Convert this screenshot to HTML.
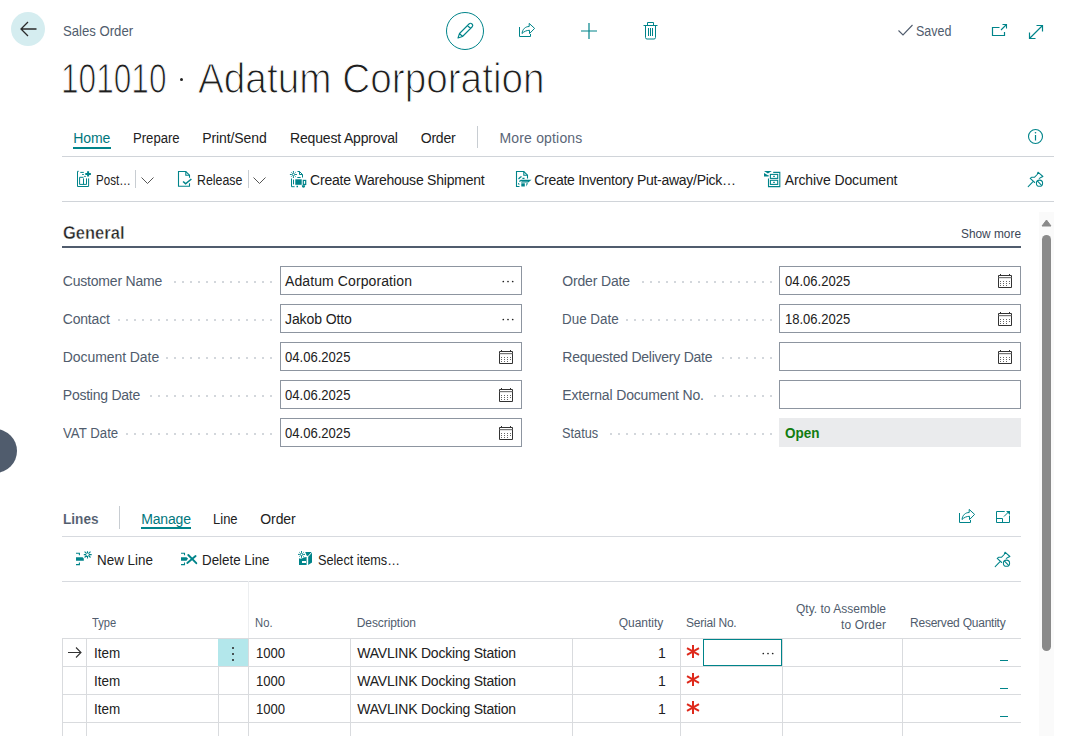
<!DOCTYPE html><html><head><meta charset="utf-8"><style>
html,body{margin:0;padding:0;background:#fff;width:1080px;height:736px;overflow:hidden;position:relative}
.t{position:absolute;white-space:nowrap;font-family:"Liberation Sans",sans-serif}
.r{position:absolute;display:block}
</style></head><body>
<div class="r" style="left:11px;top:12px;width:34px;height:34px;border-radius:50%;background:#d5edf0"></div>
<svg class="r" style="left:19px;top:20px" width="18" height="18" viewBox="0 0 18 18"><path d="M2 9 H17.5 M9 2 L2 9 L9 16" fill="none" stroke="#2b2b2b" stroke-width="1.3"/></svg>
<div class="t" style="left:62.50px;top:23.86px;font-size:14.3px;line-height:15.976px;color:#505c6d;font-weight:400;transform:scaleX(0.9189);transform-origin:0 0;">Sales Order</div>
<div class="t" style="left:60.80px;top:56.19px;font-size:42px;line-height:46.922px;color:#1e1e1e;font-weight:400;transform:scaleX(0.7525);transform-origin:0 0;-webkit-text-stroke:1.1px #fff;paint-order:normal">101010</div>
<div class="r" style="left:180px;top:78px;width:3px;height:3px;background:#222;border-radius:50%"></div>
<div class="t" style="left:198.40px;top:56.19px;font-size:42px;line-height:46.922px;color:#1e1e1e;font-weight:400;transform:scaleX(0.9221);transform-origin:0 0;-webkit-text-stroke:1.1px #fff;paint-order:normal">Adatum Corporation</div>
<div class="r" style="left:446px;top:12px;width:38px;height:38px;border-radius:50%;border:1px solid #00848a;box-sizing:border-box"></div>
<svg class="r" style="left:455px;top:21px" width="20" height="20" viewBox="0 0 20 20"><path d="M3 17 L4.5 12.5 L14 3 A1.4 1.4 0 0 1 17 6 L7.5 15.5 Z M4.5 12.5 L7.5 15.5 M12.5 4.5 L15.5 7.5" fill="none" stroke="#00848a" stroke-width="1.1" stroke-linejoin="round"/></svg>
<svg class="r" style="left:517px;top:21px" width="20" height="18" viewBox="0 0 20 18"><path d="M2.5 6 V15.5 H13.5 V13" fill="none" stroke="#00848a" stroke-width="1"/><path d="M5 12.5 C5.5 8 8.5 5.5 12.2 5.5 V2.4 L17.6 7.4 L12.5 12.6 V9.3 C9.5 9.3 7 10.5 5 12.5 Z" fill="none" stroke="#00848a" stroke-width="1" stroke-linejoin="round"/></svg>
<svg class="r" style="left:580px;top:22px" width="18" height="18" viewBox="0 0 18 18"><path d="M9 1 V17 M1 9 H17" stroke="#00848a" stroke-width="1.2"/></svg>
<svg class="r" style="left:642px;top:21px" width="18" height="20" viewBox="0 0 18 20"><path d="M1.5 4.5 H15.5 M5.5 4.5 V1.5 H11.5 V4.5 M3.5 4.5 V16.5 A1.5 1.5 0 0 0 5 18 H12 A1.5 1.5 0 0 0 13.5 16.5 V4.5" fill="none" stroke="#00848a" stroke-width="1"/><path d="M6.5 7 V15 M8.5 7 V15 M10.5 7 V15" stroke="#00848a" stroke-width="1"/></svg>
<svg class="r" style="left:897px;top:23px" width="17" height="14" viewBox="0 0 17 14"><path d="M1.5 7.5 L6 12 L15.5 2" fill="none" stroke="#505c6d" stroke-width="1.1"/></svg>
<div class="t" style="left:916.00px;top:23.93px;font-size:14px;line-height:15.641px;color:#505c6d;font-weight:400;transform:scaleX(0.8919);transform-origin:0 0;">Saved</div>
<svg class="r" style="left:990px;top:23px" width="19" height="15" viewBox="0 0 19 15"><path d="M9.5 4.5 H2.5 V12.5 H14.5 V9" fill="none" stroke="#00848a" stroke-width="1.2"/><path d="M11 7 L16.5 1.5 M12.5 1.5 H16.5 V5.5" fill="none" stroke="#00848a" stroke-width="1.1"/></svg>
<svg class="r" style="left:1027px;top:22.5px" width="18" height="18" viewBox="0 0 18 18"><path d="M2.5 15.5 L15.5 2.5 M9.5 2.5 H15.5 V8.5 M2.5 9.5 V15.5 H8.5" fill="none" stroke="#00848a" stroke-width="1.2"/></svg>
<div class="t" style="left:73.30px;top:131.23px;font-size:14px;line-height:15.641px;color:#00777d;font-weight:400;letter-spacing:-0.093px;">Home</div>
<div class="r" style="left:73px;top:147px;width:38px;height:2px;background:#00848a"></div>
<div class="t" style="left:133.30px;top:131.23px;font-size:14px;line-height:15.641px;color:#212121;font-weight:400;transform:scaleX(0.9370);transform-origin:0 0;">Prepare</div>
<div class="t" style="left:202.20px;top:131.23px;font-size:14px;line-height:15.641px;color:#212121;font-weight:400;letter-spacing:-0.098px;">Print/Send</div>
<div class="t" style="left:290.00px;top:131.23px;font-size:14px;line-height:15.641px;color:#212121;font-weight:400;letter-spacing:-0.169px;">Request Approval</div>
<div class="t" style="left:420.70px;top:131.23px;font-size:14px;line-height:15.641px;color:#212121;font-weight:400;letter-spacing:-0.193px;">Order</div>
<div class="r" style="left:477px;top:126px;width:1px;height:22px;background:#c8cdd2"></div>
<div class="t" style="left:499.50px;top:131.23px;font-size:14px;line-height:15.641px;color:#5a6677;font-weight:400;letter-spacing:0.171px;">More options</div>
<svg class="r" style="left:1027px;top:128px" width="17" height="17" viewBox="0 0 17 17"><circle cx="8.5" cy="8.5" r="7" fill="none" stroke="#00848a" stroke-width="1.1"/><path d="M8.5 7 V12.5" stroke="#00848a" stroke-width="1.2"/><circle cx="8.5" cy="4.8" r="0.8" fill="#00848a"/></svg>
<div class="r" style="left:62px;top:156px;width:992px;height:1px;background:#d0d4d9"></div>
<!--actions-->
<div class="r" style="left:62px;top:201px;width:992px;height:1px;background:#d0d4d9"></div>
<div class="t" style="left:62.80px;top:222.91px;font-size:18px;line-height:20.110px;color:#262626;font-weight:700;transform:scaleX(0.9172);transform-origin:0 0;-webkit-text-stroke:0.4px #fff">General</div>
<div class="r" style="left:62px;top:246px;width:959px;height:2px;background:#505c6d"></div>
<div class="t" style="left:961.00px;top:227.69px;font-size:12.5px;line-height:13.965px;color:#3b4656;font-weight:400;transform:scaleX(0.9486);transform-origin:0 0;">Show more</div>
<div class="t" style="left:62.80px;top:274.33px;font-size:14px;line-height:15.641px;color:#505c6d;font-weight:400;letter-spacing:-0.202px;">Customer Name</div>
<div class="r" style="left:270px;top:281px;width:2px;height:2px;background:#d3d7dc"></div><div class="r" style="left:262px;top:281px;width:2px;height:2px;background:#d3d7dc"></div><div class="r" style="left:254px;top:281px;width:2px;height:2px;background:#d3d7dc"></div><div class="r" style="left:246px;top:281px;width:2px;height:2px;background:#d3d7dc"></div><div class="r" style="left:238px;top:281px;width:2px;height:2px;background:#d3d7dc"></div><div class="r" style="left:230px;top:281px;width:2px;height:2px;background:#d3d7dc"></div><div class="r" style="left:222px;top:281px;width:2px;height:2px;background:#d3d7dc"></div><div class="r" style="left:214px;top:281px;width:2px;height:2px;background:#d3d7dc"></div><div class="r" style="left:206px;top:281px;width:2px;height:2px;background:#d3d7dc"></div><div class="r" style="left:198px;top:281px;width:2px;height:2px;background:#d3d7dc"></div><div class="r" style="left:190px;top:281px;width:2px;height:2px;background:#d3d7dc"></div><div class="r" style="left:182px;top:281px;width:2px;height:2px;background:#d3d7dc"></div><div class="r" style="left:174px;top:281px;width:2px;height:2px;background:#d3d7dc"></div>
<div class="r" style="left:280px;top:266px;width:242px;height:29px;border:1px solid #8d95a0;box-sizing:border-box;background:#fff"></div>
<div class="t" style="left:62.80px;top:312.33px;font-size:14px;line-height:15.641px;color:#505c6d;font-weight:400;letter-spacing:-0.205px;">Contact</div>
<div class="r" style="left:270px;top:319px;width:2px;height:2px;background:#d3d7dc"></div><div class="r" style="left:262px;top:319px;width:2px;height:2px;background:#d3d7dc"></div><div class="r" style="left:254px;top:319px;width:2px;height:2px;background:#d3d7dc"></div><div class="r" style="left:246px;top:319px;width:2px;height:2px;background:#d3d7dc"></div><div class="r" style="left:238px;top:319px;width:2px;height:2px;background:#d3d7dc"></div><div class="r" style="left:230px;top:319px;width:2px;height:2px;background:#d3d7dc"></div><div class="r" style="left:222px;top:319px;width:2px;height:2px;background:#d3d7dc"></div><div class="r" style="left:214px;top:319px;width:2px;height:2px;background:#d3d7dc"></div><div class="r" style="left:206px;top:319px;width:2px;height:2px;background:#d3d7dc"></div><div class="r" style="left:198px;top:319px;width:2px;height:2px;background:#d3d7dc"></div><div class="r" style="left:190px;top:319px;width:2px;height:2px;background:#d3d7dc"></div><div class="r" style="left:182px;top:319px;width:2px;height:2px;background:#d3d7dc"></div><div class="r" style="left:174px;top:319px;width:2px;height:2px;background:#d3d7dc"></div><div class="r" style="left:166px;top:319px;width:2px;height:2px;background:#d3d7dc"></div><div class="r" style="left:158px;top:319px;width:2px;height:2px;background:#d3d7dc"></div><div class="r" style="left:150px;top:319px;width:2px;height:2px;background:#d3d7dc"></div><div class="r" style="left:142px;top:319px;width:2px;height:2px;background:#d3d7dc"></div><div class="r" style="left:134px;top:319px;width:2px;height:2px;background:#d3d7dc"></div><div class="r" style="left:126px;top:319px;width:2px;height:2px;background:#d3d7dc"></div><div class="r" style="left:118px;top:319px;width:2px;height:2px;background:#d3d7dc"></div>
<div class="r" style="left:280px;top:304px;width:242px;height:29px;border:1px solid #8d95a0;box-sizing:border-box;background:#fff"></div>
<div class="t" style="left:62.80px;top:350.33px;font-size:14px;line-height:15.641px;color:#505c6d;font-weight:400;letter-spacing:-0.075px;">Document Date</div>
<div class="r" style="left:270px;top:357px;width:2px;height:2px;background:#d3d7dc"></div><div class="r" style="left:262px;top:357px;width:2px;height:2px;background:#d3d7dc"></div><div class="r" style="left:254px;top:357px;width:2px;height:2px;background:#d3d7dc"></div><div class="r" style="left:246px;top:357px;width:2px;height:2px;background:#d3d7dc"></div><div class="r" style="left:238px;top:357px;width:2px;height:2px;background:#d3d7dc"></div><div class="r" style="left:230px;top:357px;width:2px;height:2px;background:#d3d7dc"></div><div class="r" style="left:222px;top:357px;width:2px;height:2px;background:#d3d7dc"></div><div class="r" style="left:214px;top:357px;width:2px;height:2px;background:#d3d7dc"></div><div class="r" style="left:206px;top:357px;width:2px;height:2px;background:#d3d7dc"></div><div class="r" style="left:198px;top:357px;width:2px;height:2px;background:#d3d7dc"></div><div class="r" style="left:190px;top:357px;width:2px;height:2px;background:#d3d7dc"></div><div class="r" style="left:182px;top:357px;width:2px;height:2px;background:#d3d7dc"></div><div class="r" style="left:174px;top:357px;width:2px;height:2px;background:#d3d7dc"></div><div class="r" style="left:166px;top:357px;width:2px;height:2px;background:#d3d7dc"></div>
<div class="r" style="left:280px;top:342px;width:242px;height:29px;border:1px solid #8d95a0;box-sizing:border-box;background:#fff"></div>
<div class="t" style="left:62.80px;top:388.33px;font-size:14px;line-height:15.641px;color:#505c6d;font-weight:400;letter-spacing:-0.241px;">Posting Date</div>
<div class="r" style="left:270px;top:395px;width:2px;height:2px;background:#d3d7dc"></div><div class="r" style="left:262px;top:395px;width:2px;height:2px;background:#d3d7dc"></div><div class="r" style="left:254px;top:395px;width:2px;height:2px;background:#d3d7dc"></div><div class="r" style="left:246px;top:395px;width:2px;height:2px;background:#d3d7dc"></div><div class="r" style="left:238px;top:395px;width:2px;height:2px;background:#d3d7dc"></div><div class="r" style="left:230px;top:395px;width:2px;height:2px;background:#d3d7dc"></div><div class="r" style="left:222px;top:395px;width:2px;height:2px;background:#d3d7dc"></div><div class="r" style="left:214px;top:395px;width:2px;height:2px;background:#d3d7dc"></div><div class="r" style="left:206px;top:395px;width:2px;height:2px;background:#d3d7dc"></div><div class="r" style="left:198px;top:395px;width:2px;height:2px;background:#d3d7dc"></div><div class="r" style="left:190px;top:395px;width:2px;height:2px;background:#d3d7dc"></div><div class="r" style="left:182px;top:395px;width:2px;height:2px;background:#d3d7dc"></div><div class="r" style="left:174px;top:395px;width:2px;height:2px;background:#d3d7dc"></div><div class="r" style="left:166px;top:395px;width:2px;height:2px;background:#d3d7dc"></div><div class="r" style="left:158px;top:395px;width:2px;height:2px;background:#d3d7dc"></div><div class="r" style="left:150px;top:395px;width:2px;height:2px;background:#d3d7dc"></div>
<div class="r" style="left:280px;top:380px;width:242px;height:29px;border:1px solid #8d95a0;box-sizing:border-box;background:#fff"></div>
<div class="t" style="left:62.80px;top:426.33px;font-size:14px;line-height:15.641px;color:#505c6d;font-weight:400;transform:scaleX(0.9455);transform-origin:0 0;">VAT Date</div>
<div class="r" style="left:270px;top:433px;width:2px;height:2px;background:#d3d7dc"></div><div class="r" style="left:262px;top:433px;width:2px;height:2px;background:#d3d7dc"></div><div class="r" style="left:254px;top:433px;width:2px;height:2px;background:#d3d7dc"></div><div class="r" style="left:246px;top:433px;width:2px;height:2px;background:#d3d7dc"></div><div class="r" style="left:238px;top:433px;width:2px;height:2px;background:#d3d7dc"></div><div class="r" style="left:230px;top:433px;width:2px;height:2px;background:#d3d7dc"></div><div class="r" style="left:222px;top:433px;width:2px;height:2px;background:#d3d7dc"></div><div class="r" style="left:214px;top:433px;width:2px;height:2px;background:#d3d7dc"></div><div class="r" style="left:206px;top:433px;width:2px;height:2px;background:#d3d7dc"></div><div class="r" style="left:198px;top:433px;width:2px;height:2px;background:#d3d7dc"></div><div class="r" style="left:190px;top:433px;width:2px;height:2px;background:#d3d7dc"></div><div class="r" style="left:182px;top:433px;width:2px;height:2px;background:#d3d7dc"></div><div class="r" style="left:174px;top:433px;width:2px;height:2px;background:#d3d7dc"></div><div class="r" style="left:166px;top:433px;width:2px;height:2px;background:#d3d7dc"></div><div class="r" style="left:158px;top:433px;width:2px;height:2px;background:#d3d7dc"></div><div class="r" style="left:150px;top:433px;width:2px;height:2px;background:#d3d7dc"></div><div class="r" style="left:142px;top:433px;width:2px;height:2px;background:#d3d7dc"></div><div class="r" style="left:134px;top:433px;width:2px;height:2px;background:#d3d7dc"></div><div class="r" style="left:126px;top:433px;width:2px;height:2px;background:#d3d7dc"></div>
<div class="r" style="left:280px;top:418px;width:242px;height:29px;border:1px solid #8d95a0;box-sizing:border-box;background:#fff"></div>
<div class="t" style="left:285.00px;top:274.33px;font-size:14px;line-height:15.641px;color:#212121;font-weight:400;letter-spacing:0.100px;">Adatum Corporation</div>
<div class="t" style="left:285.00px;top:312.33px;font-size:14px;line-height:15.641px;color:#212121;font-weight:400;letter-spacing:-0.099px;">Jakob Otto</div>
<div class="t" style="left:285.00px;top:350.33px;font-size:14px;line-height:15.641px;color:#212121;font-weight:400;transform:scaleX(0.9334);transform-origin:0 0;">04.06.2025</div>
<div class="t" style="left:285.00px;top:388.33px;font-size:14px;line-height:15.641px;color:#212121;font-weight:400;transform:scaleX(0.9334);transform-origin:0 0;">04.06.2025</div>
<div class="t" style="left:285.00px;top:426.33px;font-size:14px;line-height:15.641px;color:#212121;font-weight:400;transform:scaleX(0.9334);transform-origin:0 0;">04.06.2025</div>
<svg class="r" style="left:500.5px;top:280px" width="14" height="3"><circle cx="2.3" cy="1.5" r="0.85" fill="#222"/><circle cx="7" cy="1.5" r="0.85" fill="#222"/><circle cx="11.7" cy="1.5" r="0.85" fill="#222"/></svg>
<svg class="r" style="left:500.5px;top:318px" width="14" height="3"><circle cx="2.3" cy="1.5" r="0.85" fill="#222"/><circle cx="7" cy="1.5" r="0.85" fill="#222"/><circle cx="11.7" cy="1.5" r="0.85" fill="#222"/></svg>
<svg class="r" style="left:498px;top:349px" width="17" height="16" viewBox="0 0 17 16"><path d="M1.5 2.5 H14.5 V14.5 H1.5 Z" fill="none" stroke="#333" stroke-width="1"/><path d="M1.5 4.6 H14.5" stroke="#777" stroke-width="1.2"/><path d="M3.5 1 V3 M12.5 1 V3" stroke="#333" stroke-width="1"/><g fill="#666"><rect x="3" y="8" width="1" height="1"/><rect x="6" y="8" width="1" height="1"/><rect x="9" y="8" width="1" height="1"/><rect x="12" y="8" width="1" height="1"/><rect x="3" y="10" width="1" height="1"/><rect x="6" y="10" width="1" height="1"/><rect x="9" y="10" width="1" height="1"/><rect x="12" y="10" width="1" height="1"/><rect x="3" y="12" width="1" height="1"/><rect x="6" y="12" width="1" height="1"/><rect x="9" y="12" width="1" height="1"/></g></svg>
<svg class="r" style="left:498px;top:387px" width="17" height="16" viewBox="0 0 17 16"><path d="M1.5 2.5 H14.5 V14.5 H1.5 Z" fill="none" stroke="#333" stroke-width="1"/><path d="M1.5 4.6 H14.5" stroke="#777" stroke-width="1.2"/><path d="M3.5 1 V3 M12.5 1 V3" stroke="#333" stroke-width="1"/><g fill="#666"><rect x="3" y="8" width="1" height="1"/><rect x="6" y="8" width="1" height="1"/><rect x="9" y="8" width="1" height="1"/><rect x="12" y="8" width="1" height="1"/><rect x="3" y="10" width="1" height="1"/><rect x="6" y="10" width="1" height="1"/><rect x="9" y="10" width="1" height="1"/><rect x="12" y="10" width="1" height="1"/><rect x="3" y="12" width="1" height="1"/><rect x="6" y="12" width="1" height="1"/><rect x="9" y="12" width="1" height="1"/></g></svg>
<svg class="r" style="left:498px;top:425px" width="17" height="16" viewBox="0 0 17 16"><path d="M1.5 2.5 H14.5 V14.5 H1.5 Z" fill="none" stroke="#333" stroke-width="1"/><path d="M1.5 4.6 H14.5" stroke="#777" stroke-width="1.2"/><path d="M3.5 1 V3 M12.5 1 V3" stroke="#333" stroke-width="1"/><g fill="#666"><rect x="3" y="8" width="1" height="1"/><rect x="6" y="8" width="1" height="1"/><rect x="9" y="8" width="1" height="1"/><rect x="12" y="8" width="1" height="1"/><rect x="3" y="10" width="1" height="1"/><rect x="6" y="10" width="1" height="1"/><rect x="9" y="10" width="1" height="1"/><rect x="12" y="10" width="1" height="1"/><rect x="3" y="12" width="1" height="1"/><rect x="6" y="12" width="1" height="1"/><rect x="9" y="12" width="1" height="1"/></g></svg>
<div class="t" style="left:562.30px;top:274.33px;font-size:14px;line-height:15.641px;color:#505c6d;font-weight:400;letter-spacing:-0.170px;">Order Date</div>
<div class="r" style="left:770px;top:281px;width:2px;height:2px;background:#d3d7dc"></div><div class="r" style="left:762px;top:281px;width:2px;height:2px;background:#d3d7dc"></div><div class="r" style="left:754px;top:281px;width:2px;height:2px;background:#d3d7dc"></div><div class="r" style="left:746px;top:281px;width:2px;height:2px;background:#d3d7dc"></div><div class="r" style="left:738px;top:281px;width:2px;height:2px;background:#d3d7dc"></div><div class="r" style="left:730px;top:281px;width:2px;height:2px;background:#d3d7dc"></div><div class="r" style="left:722px;top:281px;width:2px;height:2px;background:#d3d7dc"></div><div class="r" style="left:714px;top:281px;width:2px;height:2px;background:#d3d7dc"></div><div class="r" style="left:706px;top:281px;width:2px;height:2px;background:#d3d7dc"></div><div class="r" style="left:698px;top:281px;width:2px;height:2px;background:#d3d7dc"></div><div class="r" style="left:690px;top:281px;width:2px;height:2px;background:#d3d7dc"></div><div class="r" style="left:682px;top:281px;width:2px;height:2px;background:#d3d7dc"></div><div class="r" style="left:674px;top:281px;width:2px;height:2px;background:#d3d7dc"></div><div class="r" style="left:666px;top:281px;width:2px;height:2px;background:#d3d7dc"></div><div class="r" style="left:658px;top:281px;width:2px;height:2px;background:#d3d7dc"></div><div class="r" style="left:650px;top:281px;width:2px;height:2px;background:#d3d7dc"></div><div class="r" style="left:642px;top:281px;width:2px;height:2px;background:#d3d7dc"></div>
<div class="t" style="left:562.30px;top:312.33px;font-size:14px;line-height:15.641px;color:#505c6d;font-weight:400;transform:scaleX(0.9586);transform-origin:0 0;">Due Date</div>
<div class="r" style="left:770px;top:319px;width:2px;height:2px;background:#d3d7dc"></div><div class="r" style="left:762px;top:319px;width:2px;height:2px;background:#d3d7dc"></div><div class="r" style="left:754px;top:319px;width:2px;height:2px;background:#d3d7dc"></div><div class="r" style="left:746px;top:319px;width:2px;height:2px;background:#d3d7dc"></div><div class="r" style="left:738px;top:319px;width:2px;height:2px;background:#d3d7dc"></div><div class="r" style="left:730px;top:319px;width:2px;height:2px;background:#d3d7dc"></div><div class="r" style="left:722px;top:319px;width:2px;height:2px;background:#d3d7dc"></div><div class="r" style="left:714px;top:319px;width:2px;height:2px;background:#d3d7dc"></div><div class="r" style="left:706px;top:319px;width:2px;height:2px;background:#d3d7dc"></div><div class="r" style="left:698px;top:319px;width:2px;height:2px;background:#d3d7dc"></div><div class="r" style="left:690px;top:319px;width:2px;height:2px;background:#d3d7dc"></div><div class="r" style="left:682px;top:319px;width:2px;height:2px;background:#d3d7dc"></div><div class="r" style="left:674px;top:319px;width:2px;height:2px;background:#d3d7dc"></div><div class="r" style="left:666px;top:319px;width:2px;height:2px;background:#d3d7dc"></div><div class="r" style="left:658px;top:319px;width:2px;height:2px;background:#d3d7dc"></div><div class="r" style="left:650px;top:319px;width:2px;height:2px;background:#d3d7dc"></div><div class="r" style="left:642px;top:319px;width:2px;height:2px;background:#d3d7dc"></div><div class="r" style="left:634px;top:319px;width:2px;height:2px;background:#d3d7dc"></div><div class="r" style="left:626px;top:319px;width:2px;height:2px;background:#d3d7dc"></div>
<div class="t" style="left:562.30px;top:350.33px;font-size:14px;line-height:15.641px;color:#505c6d;font-weight:400;letter-spacing:-0.246px;">Requested Delivery Date</div>
<div class="r" style="left:770px;top:357px;width:2px;height:2px;background:#d3d7dc"></div><div class="r" style="left:762px;top:357px;width:2px;height:2px;background:#d3d7dc"></div><div class="r" style="left:754px;top:357px;width:2px;height:2px;background:#d3d7dc"></div><div class="r" style="left:746px;top:357px;width:2px;height:2px;background:#d3d7dc"></div><div class="r" style="left:738px;top:357px;width:2px;height:2px;background:#d3d7dc"></div><div class="r" style="left:730px;top:357px;width:2px;height:2px;background:#d3d7dc"></div><div class="r" style="left:722px;top:357px;width:2px;height:2px;background:#d3d7dc"></div>
<div class="t" style="left:562.30px;top:388.33px;font-size:14px;line-height:15.641px;color:#505c6d;font-weight:400;letter-spacing:-0.153px;">External Document No.</div>
<div class="r" style="left:770px;top:395px;width:2px;height:2px;background:#d3d7dc"></div><div class="r" style="left:762px;top:395px;width:2px;height:2px;background:#d3d7dc"></div><div class="r" style="left:754px;top:395px;width:2px;height:2px;background:#d3d7dc"></div><div class="r" style="left:746px;top:395px;width:2px;height:2px;background:#d3d7dc"></div><div class="r" style="left:738px;top:395px;width:2px;height:2px;background:#d3d7dc"></div><div class="r" style="left:730px;top:395px;width:2px;height:2px;background:#d3d7dc"></div><div class="r" style="left:722px;top:395px;width:2px;height:2px;background:#d3d7dc"></div><div class="r" style="left:714px;top:395px;width:2px;height:2px;background:#d3d7dc"></div>
<div class="t" style="left:562.30px;top:426.33px;font-size:14px;line-height:15.641px;color:#505c6d;font-weight:400;transform:scaleX(0.9121);transform-origin:0 0;">Status</div>
<div class="r" style="left:770px;top:433px;width:2px;height:2px;background:#d3d7dc"></div><div class="r" style="left:762px;top:433px;width:2px;height:2px;background:#d3d7dc"></div><div class="r" style="left:754px;top:433px;width:2px;height:2px;background:#d3d7dc"></div><div class="r" style="left:746px;top:433px;width:2px;height:2px;background:#d3d7dc"></div><div class="r" style="left:738px;top:433px;width:2px;height:2px;background:#d3d7dc"></div><div class="r" style="left:730px;top:433px;width:2px;height:2px;background:#d3d7dc"></div><div class="r" style="left:722px;top:433px;width:2px;height:2px;background:#d3d7dc"></div><div class="r" style="left:714px;top:433px;width:2px;height:2px;background:#d3d7dc"></div><div class="r" style="left:706px;top:433px;width:2px;height:2px;background:#d3d7dc"></div><div class="r" style="left:698px;top:433px;width:2px;height:2px;background:#d3d7dc"></div><div class="r" style="left:690px;top:433px;width:2px;height:2px;background:#d3d7dc"></div><div class="r" style="left:682px;top:433px;width:2px;height:2px;background:#d3d7dc"></div><div class="r" style="left:674px;top:433px;width:2px;height:2px;background:#d3d7dc"></div><div class="r" style="left:666px;top:433px;width:2px;height:2px;background:#d3d7dc"></div><div class="r" style="left:658px;top:433px;width:2px;height:2px;background:#d3d7dc"></div><div class="r" style="left:650px;top:433px;width:2px;height:2px;background:#d3d7dc"></div><div class="r" style="left:642px;top:433px;width:2px;height:2px;background:#d3d7dc"></div><div class="r" style="left:634px;top:433px;width:2px;height:2px;background:#d3d7dc"></div><div class="r" style="left:626px;top:433px;width:2px;height:2px;background:#d3d7dc"></div><div class="r" style="left:618px;top:433px;width:2px;height:2px;background:#d3d7dc"></div><div class="r" style="left:610px;top:433px;width:2px;height:2px;background:#d3d7dc"></div>
<div class="r" style="left:779px;top:266px;width:242px;height:29px;border:1px solid #8d95a0;box-sizing:border-box;background:#fff"></div>
<div class="r" style="left:779px;top:304px;width:242px;height:29px;border:1px solid #8d95a0;box-sizing:border-box;background:#fff"></div>
<div class="r" style="left:779px;top:342px;width:242px;height:29px;border:1px solid #8d95a0;box-sizing:border-box;background:#fff"></div>
<div class="r" style="left:779px;top:380px;width:242px;height:29px;border:1px solid #8d95a0;box-sizing:border-box;background:#fff"></div>
<div class="r" style="left:779px;top:418px;width:242px;height:29px;background:#eaebed"></div>
<div class="t" style="left:784.50px;top:274.33px;font-size:14px;line-height:15.641px;color:#212121;font-weight:400;transform:scaleX(0.9305);transform-origin:0 0;">04.06.2025</div>
<div class="t" style="left:784.50px;top:312.33px;font-size:14px;line-height:15.641px;color:#212121;font-weight:400;transform:scaleX(0.9305);transform-origin:0 0;">18.06.2025</div>
<svg class="r" style="left:997px;top:273px" width="17" height="16" viewBox="0 0 17 16"><path d="M1.5 2.5 H14.5 V14.5 H1.5 Z" fill="none" stroke="#333" stroke-width="1"/><path d="M1.5 4.6 H14.5" stroke="#777" stroke-width="1.2"/><path d="M3.5 1 V3 M12.5 1 V3" stroke="#333" stroke-width="1"/><g fill="#666"><rect x="3" y="8" width="1" height="1"/><rect x="6" y="8" width="1" height="1"/><rect x="9" y="8" width="1" height="1"/><rect x="12" y="8" width="1" height="1"/><rect x="3" y="10" width="1" height="1"/><rect x="6" y="10" width="1" height="1"/><rect x="9" y="10" width="1" height="1"/><rect x="12" y="10" width="1" height="1"/><rect x="3" y="12" width="1" height="1"/><rect x="6" y="12" width="1" height="1"/><rect x="9" y="12" width="1" height="1"/></g></svg>
<svg class="r" style="left:997px;top:311px" width="17" height="16" viewBox="0 0 17 16"><path d="M1.5 2.5 H14.5 V14.5 H1.5 Z" fill="none" stroke="#333" stroke-width="1"/><path d="M1.5 4.6 H14.5" stroke="#777" stroke-width="1.2"/><path d="M3.5 1 V3 M12.5 1 V3" stroke="#333" stroke-width="1"/><g fill="#666"><rect x="3" y="8" width="1" height="1"/><rect x="6" y="8" width="1" height="1"/><rect x="9" y="8" width="1" height="1"/><rect x="12" y="8" width="1" height="1"/><rect x="3" y="10" width="1" height="1"/><rect x="6" y="10" width="1" height="1"/><rect x="9" y="10" width="1" height="1"/><rect x="12" y="10" width="1" height="1"/><rect x="3" y="12" width="1" height="1"/><rect x="6" y="12" width="1" height="1"/><rect x="9" y="12" width="1" height="1"/></g></svg>
<svg class="r" style="left:997px;top:349px" width="17" height="16" viewBox="0 0 17 16"><path d="M1.5 2.5 H14.5 V14.5 H1.5 Z" fill="none" stroke="#333" stroke-width="1"/><path d="M1.5 4.6 H14.5" stroke="#777" stroke-width="1.2"/><path d="M3.5 1 V3 M12.5 1 V3" stroke="#333" stroke-width="1"/><g fill="#666"><rect x="3" y="8" width="1" height="1"/><rect x="6" y="8" width="1" height="1"/><rect x="9" y="8" width="1" height="1"/><rect x="12" y="8" width="1" height="1"/><rect x="3" y="10" width="1" height="1"/><rect x="6" y="10" width="1" height="1"/><rect x="9" y="10" width="1" height="1"/><rect x="12" y="10" width="1" height="1"/><rect x="3" y="12" width="1" height="1"/><rect x="6" y="12" width="1" height="1"/><rect x="9" y="12" width="1" height="1"/></g></svg>
<div class="t" style="left:784.60px;top:426.23px;font-size:14px;line-height:15.641px;color:#107c10;font-weight:700;transform:scaleX(0.9645);transform-origin:0 0;">Open</div>
<div class="r" style="left:1039px;top:212px;width:15px;height:524px;background:#fafafa"></div>
<svg class="r" style="left:1041px;top:219px" width="11" height="8" viewBox="0 0 11 8"><path d="M5.5 1 L10 7 H1 Z" fill="#8a8a8a" stroke="#8a8a8a" stroke-linejoin="round" stroke-width="1"/></svg>
<div class="r" style="left:1042px;top:235px;width:9px;height:416px;background:#8a8a8a;border-radius:4.5px"></div>
<div class="r" style="left:-27px;top:429px;width:44px;height:44px;border-radius:50%;background:#505c6d"></div>
<div class="t" style="left:62.70px;top:509.57px;font-size:15.5px;line-height:17.317px;color:#505c6d;font-weight:700;transform:scaleX(0.8800);transform-origin:0 0;-webkit-text-stroke:0.1px #fff">Lines</div>
<div class="r" style="left:119px;top:506px;width:1px;height:23px;background:#c8cdd2"></div>
<div class="t" style="left:141.20px;top:511.53px;font-size:14px;line-height:15.641px;color:#00777d;font-weight:400;letter-spacing:-0.162px;">Manage</div>
<div class="r" style="left:141px;top:527px;width:50px;height:2px;background:#00848a"></div>
<div class="t" style="left:213.40px;top:511.53px;font-size:14px;line-height:15.641px;color:#212121;font-weight:400;transform:scaleX(0.9297);transform-origin:0 0;">Line</div>
<div class="t" style="left:260.30px;top:511.53px;font-size:14px;line-height:15.641px;color:#212121;font-weight:400;letter-spacing:-0.093px;">Order</div>
<div class="r" style="left:62px;top:536px;width:959px;height:1px;background:#d7dadf"></div>
<div class="r" style="left:62px;top:581px;width:959px;height:1px;background:#d7dadf"></div>
<svg class="r" style="left:72px;top:166px" width="28" height="26" viewBox="0 0 28 26" fill="none" stroke="#00848a" stroke-width="1"><path d="M6.7 5.3 H5.5 V20.5 H16.6 V12.4"/><path d="M7.6 18.4 V11.3 H11.5 M11.5 12.4 V18.4 M14.5 12.4 V18.4 M7.6 18.4 H14.5"/><path d="M8.3 6.4 H11.8 M10.2 8.5 H11.8 M12.2 10.4 H13.8"/><path d="M16.1 5.3 V10.6 M13.3 7.95 H18.9" stroke-width="2"/></svg>
<div class="t" style="left:95.60px;top:173.23px;font-size:14px;line-height:15.641px;color:#212121;font-weight:400;transform:scaleX(0.8262);transform-origin:0 0;">Post…</div>
<div class="r" style="left:135px;top:170px;width:1px;height:18px;background:#c8cdd2"></div>
<svg class="r" style="left:140px;top:176px" width="15" height="9" viewBox="0 0 15 9"><path d="M1.5 1.5 L7.5 7.5 L13.5 1.5" fill="none" stroke="#555" stroke-width="1"/></svg>
<svg class="r" style="left:172px;top:166px" width="28" height="26" viewBox="0 0 28 26" fill="none" stroke="#00848a" stroke-width="1"><path d="M17.5 11.7 V9.2 L13.8 5.5 H6.5 V20.3 H17.5 V17.2" stroke-width="1.1"/><path d="M13.8 5.5 V9.2 H17.5" stroke-width="1.1"/><path d="M11.1 15.5 L13.6 17.8 L19.4 13" stroke-width="1.6"/></svg>
<div class="t" style="left:196.90px;top:173.23px;font-size:14px;line-height:15.641px;color:#212121;font-weight:400;transform:scaleX(0.8836);transform-origin:0 0;">Release</div>
<div class="r" style="left:248px;top:170px;width:1px;height:18px;background:#c8cdd2"></div>
<svg class="r" style="left:252px;top:176px" width="15" height="9" viewBox="0 0 15 9"><path d="M1.5 1.5 L7.5 7.5 L13.5 1.5" fill="none" stroke="#555" stroke-width="1"/></svg>
<svg class="r" style="left:286px;top:166px" width="28" height="26" viewBox="0 0 28 26" fill="none" stroke="#00848a" stroke-width="1"><circle cx="7.4" cy="8.5" r="1.2"/><path d="M7.4 5 V6.8 M7.4 10.2 V12 M3.9 8.5 H5.7 M9.1 8.5 H10.9 M5 6.1 L5.6 6.7 M9.2 10.3 L9.8 10.9 M9.8 6.1 L9.2 6.7 M5.6 10.3 L5 10.9"/><path d="M11.5 5.5 H13.5 L16.5 8.5 V11.5 M13.5 5.5 V8.5 H16.5"/><path d="M11.3 11.5 H14.6"/><path d="M5.5 12.5 V20.7 H8.6 M7.5 13.6 V18.4"/><rect x="9.3" y="13.3" width="6.4" height="5.5" fill="#00848a" stroke="none"/><rect x="17.3" y="14.4" width="2.4" height="4" stroke-width="1.2"/><path d="M10.5 20.5 H12 M16.5 20 A1 1 0 0 0 18.5 20 Z" stroke-width="1.3"/></svg>
<div class="t" style="left:310.10px;top:173.23px;font-size:14px;line-height:15.641px;color:#212121;font-weight:400;letter-spacing:-0.227px;">Create Warehouse Shipment</div>
<svg class="r" style="left:510px;top:166px" width="28" height="26" viewBox="0 0 28 26" fill="none" stroke="#00848a" stroke-width="1"><path d="M17.5 12.4 V9.2 L13.8 5.5 H6.5 V20.5 H9.5" stroke-width="1.1"/><path d="M13.8 5.5 V9.2 H17.5" stroke-width="1.1"/><path d="M8.5 13 L10 11.5 L11.5 10.4 M12.4 12.4 H14.5" stroke-width="1.2"/><path d="M9.3 15.5 L11 14.4 H19.8 L18 15.8 H12 L11.5 16.5" stroke-width="1.2"/><path d="M8.5 17.2 V18.2 H9.5" stroke-width="1"/><rect x="11.3" y="17.3" width="3.5" height="3.2" fill="#00848a" stroke="none"/><path d="M16.3 17.3 H18 L16.3 20.5 Z" fill="#00848a" stroke="none"/></svg>
<div class="t" style="left:534.20px;top:173.23px;font-size:14px;line-height:15.641px;color:#212121;font-weight:400;letter-spacing:-0.276px;">Create Inventory Put-away/Pick…</div>
<svg class="r" style="left:758px;top:166px" width="28" height="26" viewBox="0 0 28 26" fill="none" stroke="#00848a" stroke-width="1"><path d="M6 5 H13.8 L9.9 7.6 Z" fill="#00848a" stroke="none"/><path d="M6 7 L9.9 9.3 L10.6 8.9 V10.6 H6 Z" fill="#00848a" stroke="none"/><path d="M15.2 6.4 H21.8 V20.6 H10.5 V12.4" stroke-width="1.1"/><rect x="12.4" y="8.4" width="7.3" height="4" stroke-width="1.1"/><rect x="12.4" y="14.3" width="7.3" height="4.1" stroke-width="1.1"/><path d="M15.2 10.4 H16.8 M15.2 16.4 H16.8" stroke-width="1.2"/></svg>
<div class="t" style="left:784.70px;top:173.23px;font-size:14px;line-height:15.641px;color:#212121;font-weight:400;letter-spacing:-0.105px;">Archive Document</div>
<svg class="r" style="left:1027px;top:171px" width="18" height="18" viewBox="0 0 18 18" fill="none" stroke="#00848a" stroke-width="1.05" stroke-linejoin="round" stroke-linecap="round"><path d="M1.2 15.6 L5.8 10.9"/><path d="M7.7 11.5 L3.2 7.3 L4.5 6.3 H7.4 L10.2 3.5 L11 1.2 L15.9 5.5 L14.3 6.3 L12.3 7.4"/><circle cx="12.5" cy="12.2" r="3.1"/><path d="M10.5 10.2 L14.6 14.3"/></svg>
<svg class="r" style="left:957px;top:507px" width="20" height="18" viewBox="0 0 20 18"><path d="M2.5 6 V15.5 H13.5 V13" fill="none" stroke="#00848a" stroke-width="1"/><path d="M5 12.5 C5.5 8 8.5 5.5 12.2 5.5 V2.4 L17.6 7.4 L12.5 12.6 V9.3 C9.5 9.3 7 10.5 5 12.5 Z" fill="none" stroke="#00848a" stroke-width="1" stroke-linejoin="round"/></svg>
<svg class="r" style="left:995px;top:509px" width="16" height="15" viewBox="0 0 16 15"><path d="M9.7 2.5 H1.5 V13.5 H14.5 V6.6 M1.5 9.5 H7.5 V13.5" fill="none" stroke="#00848a" stroke-width="1"/><path d="M9 7.5 L14 2.5" fill="none" stroke="#00848a" stroke-width="1"/><path d="M11 2 H15 V6 Z" fill="#00848a"/></svg>
<svg class="r" style="left:994px;top:551px" width="18" height="18" viewBox="0 0 18 18" fill="none" stroke="#00848a" stroke-width="1.05" stroke-linejoin="round" stroke-linecap="round"><path d="M1.2 15.6 L5.8 10.9"/><path d="M7.7 11.5 L3.2 7.3 L4.5 6.3 H7.4 L10.2 3.5 L11 1.2 L15.9 5.5 L14.3 6.3 L12.3 7.4"/><circle cx="12.5" cy="12.2" r="3.1"/><path d="M10.5 10.2 L14.6 14.3"/></svg>
<svg class="r" style="left:72px;top:544px" width="28" height="26" viewBox="0 0 28 26" fill="none" stroke="#00848a" stroke-width="1"><path d="M4 9.3 H7.4 V11.3 M4 20.6 H7.4 V18.5" stroke-width="1.1"/><path d="M4 13.3 H10.6 L11.8 14.5 V16.7 H4 Z" fill="#00848a" stroke="none"/><path d="M15.5 7.2 V14.5 M11.8 10.6 H19.7 M12.6 7.6 L18.5 13.5 M18.5 7.6 L12.6 13.5" stroke-width="1.1"/><circle cx="15.5" cy="10.6" r="1.3" fill="#fff" stroke="none"/></svg>
<div class="t" style="left:96.60px;top:553.13px;font-size:14px;line-height:15.641px;color:#212121;font-weight:400;transform:scaleX(0.9575);transform-origin:0 0;">New Line</div>
<svg class="r" style="left:176px;top:544px" width="28" height="26" viewBox="0 0 28 26" fill="none" stroke="#00848a" stroke-width="1"><path d="M5 9.3 H8.5 V11.3 M5 20.6 H8.5 V18.5" stroke-width="1.1"/><path d="M5 13.3 H10.5 L12 14.6 L10.5 16.7 H5 Z" fill="#00848a" stroke="none"/><path d="M12.3 11 L20.3 19.2 M19.6 12 L11.3 19" stroke-width="1.9" stroke-linecap="round"/></svg>
<div class="t" style="left:201.80px;top:553.13px;font-size:14px;line-height:15.641px;color:#212121;font-weight:400;transform:scaleX(0.9529);transform-origin:0 0;">Delete Line</div>
<svg class="r" style="left:292px;top:544px" width="28" height="26" viewBox="0 0 28 26" fill="none" stroke="#00848a" stroke-width="1"><circle cx="9.5" cy="10.4" r="1.2"/><path d="M9.5 7 V8.8 M9.5 12 V13.8 M6 10.4 H7.8 M11.2 10.4 H13 M7.2 8.1 L7.8 8.7 M11.2 12.1 L11.8 12.7 M11.8 8.1 L11.2 8.7 M7.8 12.1 L7.2 12.7"/><path d="M7 14.3 L8.3 14.8 L10.5 14.2 L11.5 13.5 L14.6 13 V21 H7 Z" fill="#00848a" stroke="none"/><rect x="10" y="17" width="4" height="2" fill="#fff" stroke="none"/><path d="M13.2 8 H20 L16.4 12.3 L14.6 11.5 Z" fill="#00848a" stroke="none"/><path d="M16.2 12.8 L20 8.6 V18.5 L16.2 21 Z" fill="#00848a" stroke="none"/><path d="M19.8 8.2 L15.8 12.6" stroke="#fff" stroke-width="0.8"/></svg>
<div class="t" style="left:318.30px;top:553.13px;font-size:14px;line-height:15.641px;color:#212121;font-weight:400;transform:scaleX(0.9077);transform-origin:0 0;">Select items…</div>
<div class="r" style="left:62px;top:638px;width:959px;height:1px;background:#d9dbde"></div>
<div class="r" style="left:62px;top:666px;width:959px;height:1px;background:#d9dbde"></div>
<div class="r" style="left:62px;top:694px;width:959px;height:1px;background:#d9dbde"></div>
<div class="r" style="left:62px;top:722px;width:959px;height:1px;background:#d9dbde"></div>
<div class="r" style="left:62px;top:638px;width:1px;height:98px;background:#d9dbde"></div>
<div class="r" style="left:86px;top:638px;width:1px;height:98px;background:#d9dbde"></div>
<div class="r" style="left:218px;top:638px;width:1px;height:98px;background:#d9dbde"></div>
<div class="r" style="left:248px;top:638px;width:1px;height:98px;background:#d9dbde"></div>
<div class="r" style="left:350px;top:638px;width:1px;height:98px;background:#d9dbde"></div>
<div class="r" style="left:572px;top:638px;width:1px;height:98px;background:#d9dbde"></div>
<div class="r" style="left:680px;top:638px;width:1px;height:98px;background:#d9dbde"></div>
<div class="r" style="left:782px;top:638px;width:1px;height:98px;background:#d9dbde"></div>
<div class="r" style="left:902px;top:638px;width:1px;height:98px;background:#d9dbde"></div>
<div class="r" style="left:248px;top:581px;width:1px;height:57px;background:#eceef0"></div>
<div class="r" style="left:218px;top:639px;width:30px;height:27px;background:#b3e7eb"></div>
<svg class="r" style="left:228px;top:645px" width="10" height="18" viewBox="0 0 10 18"><circle cx="5" cy="3" r="1" fill="#222"/><circle cx="5" cy="9" r="1" fill="#222"/><circle cx="5" cy="15" r="1" fill="#222"/></svg>
<svg class="r" style="left:66px;top:645px" width="18" height="14" viewBox="0 0 18 14"><path d="M2 7.5 H15 M10 2.5 L15 7.5 L10 12.5" fill="none" stroke="#333" stroke-width="1.1"/></svg>
<div class="t" style="left:92.40px;top:617.14px;font-size:12px;line-height:13.406px;color:#505c6d;font-weight:400;transform:scaleX(0.9293);transform-origin:0 0;">Type</div>
<div class="t" style="left:254.70px;top:617.14px;font-size:12px;line-height:13.406px;color:#505c6d;font-weight:400;transform:scaleX(0.9378);transform-origin:0 0;">No.</div>
<div class="t" style="left:356.70px;top:617.14px;font-size:12px;line-height:13.406px;color:#505c6d;font-weight:400;letter-spacing:-0.070px;">Description</div>
<div class="t" style="left:618.70px;top:617.14px;font-size:12px;line-height:13.406px;color:#505c6d;font-weight:400;letter-spacing:-0.014px;">Quantity</div>
<div class="t" style="left:686.00px;top:617.14px;font-size:12px;line-height:13.406px;color:#505c6d;font-weight:400;letter-spacing:-0.220px;">Serial No.</div>
<div class="t" style="left:796.00px;top:603.44px;font-size:12px;line-height:13.406px;color:#505c6d;font-weight:400;letter-spacing:0.012px;">Qty. to Assemble</div>
<div class="t" style="left:841.00px;top:619.14px;font-size:12px;line-height:13.406px;color:#505c6d;font-weight:400;letter-spacing:0.137px;">to Order</div>
<div class="t" style="left:910.00px;top:617.14px;font-size:12px;line-height:13.406px;color:#505c6d;font-weight:400;letter-spacing:-0.229px;">Reserved Quantity</div>
<div class="t" style="left:93.80px;top:645.93px;font-size:14px;line-height:15.641px;color:#212121;font-weight:400;transform:scaleX(0.9622);transform-origin:0 0;">Item</div>
<div class="t" style="left:255.90px;top:645.93px;font-size:14px;line-height:15.641px;color:#212121;font-weight:400;transform:scaleX(0.9342);transform-origin:0 0;">1000</div>
<div class="t" style="left:357.30px;top:645.93px;font-size:14px;line-height:15.641px;color:#212121;font-weight:400;letter-spacing:-0.213px;">WAVLINK Docking Station</div>
<div class="t" style="left:658.00px;top:645.93px;font-size:14px;line-height:15.641px;color:#212121;font-weight:400;letter-spacing:0.000px;">1</div>
<svg class="r" style="left:685px;top:644px" width="16" height="15" viewBox="0 0 16 15"><path d="M8 1 V14 M2 4.2 L14 10.8 M14 4.2 L2 10.8" stroke="#de2a1c" stroke-width="2"/></svg>
<div class="r" style="left:1000px;top:660px;width:8px;height:1px;background:#00848a"></div>
<div class="t" style="left:93.80px;top:673.93px;font-size:14px;line-height:15.641px;color:#212121;font-weight:400;transform:scaleX(0.9622);transform-origin:0 0;">Item</div>
<div class="t" style="left:255.90px;top:673.93px;font-size:14px;line-height:15.641px;color:#212121;font-weight:400;transform:scaleX(0.9342);transform-origin:0 0;">1000</div>
<div class="t" style="left:357.30px;top:673.93px;font-size:14px;line-height:15.641px;color:#212121;font-weight:400;letter-spacing:-0.213px;">WAVLINK Docking Station</div>
<div class="t" style="left:658.00px;top:673.93px;font-size:14px;line-height:15.641px;color:#212121;font-weight:400;letter-spacing:0.000px;">1</div>
<svg class="r" style="left:685px;top:672px" width="16" height="15" viewBox="0 0 16 15"><path d="M8 1 V14 M2 4.2 L14 10.8 M14 4.2 L2 10.8" stroke="#de2a1c" stroke-width="2"/></svg>
<div class="r" style="left:1000px;top:688px;width:8px;height:1px;background:#00848a"></div>
<div class="t" style="left:93.80px;top:701.93px;font-size:14px;line-height:15.641px;color:#212121;font-weight:400;transform:scaleX(0.9622);transform-origin:0 0;">Item</div>
<div class="t" style="left:255.90px;top:701.93px;font-size:14px;line-height:15.641px;color:#212121;font-weight:400;transform:scaleX(0.9342);transform-origin:0 0;">1000</div>
<div class="t" style="left:357.30px;top:701.93px;font-size:14px;line-height:15.641px;color:#212121;font-weight:400;letter-spacing:-0.213px;">WAVLINK Docking Station</div>
<div class="t" style="left:658.00px;top:701.93px;font-size:14px;line-height:15.641px;color:#212121;font-weight:400;letter-spacing:0.000px;">1</div>
<svg class="r" style="left:685px;top:700px" width="16" height="15" viewBox="0 0 16 15"><path d="M8 1 V14 M2 4.2 L14 10.8 M14 4.2 L2 10.8" stroke="#de2a1c" stroke-width="2"/></svg>
<div class="r" style="left:1000px;top:716px;width:8px;height:1px;background:#00848a"></div>
<div class="r" style="left:703px;top:639px;width:79px;height:27px;border:1px solid #00848a;box-sizing:border-box;background:#fff"></div>
<svg class="r" style="left:760.5px;top:652px" width="14" height="3"><circle cx="2.3" cy="1.5" r="0.85" fill="#222"/><circle cx="7" cy="1.5" r="0.85" fill="#222"/><circle cx="11.7" cy="1.5" r="0.85" fill="#222"/></svg>
</body></html>
